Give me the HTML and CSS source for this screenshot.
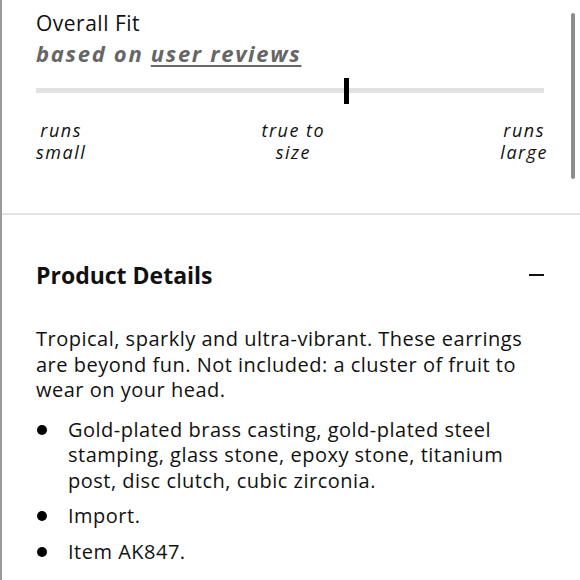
FILE: index.html
```html
<!DOCTYPE html>
<html>
<head>
<meta charset="utf-8">
<link rel="stylesheet" href="styles.css">
</head>
<body>
<div class="page">
  <div class="scrollbar"></div>
  <section class="fit">
    <div class="fit-title">Overall Fit</div>
    <div class="fit-sub">based on <span class="link">user reviews</span></div>
    <div class="track"><div class="marker"></div></div>
    <div class="labels">
      <div class="lbl">runs<br>small</div>
      <div class="lbl">true to<br>size</div>
      <div class="lbl">runs<br>large</div>
    </div>
  </section>
  <section class="details">
    <div class="details-head">
      <h2>Product Details</h2>
      <div class="minus"></div>
    </div>
    <p class="desc">Tropical, sparkly and ultra-vibrant. These earrings are beyond fun. Not included: a cluster of fruit to wear on your head.</p>
    <ul class="bullets">
      <li>Gold-plated brass casting, gold-plated steel stamping, glass stone, epoxy stone, titanium post, disc clutch, cubic zirconia.</li>
      <li>Import.</li>
      <li>Item AK847.</li>
    </ul>
  </section>
</div>
</body>
</html>
```
FILE: styles.css
```css
html, body {
  margin: 0;
  padding: 0;
  background: #fff;
}
.page {
  position: relative;
  height: 580px;
  overflow: hidden;
  border-left: 2px solid #9a9a9a;
  font-family: "Open Sans", "Noto Sans", sans-serif;
  color: #111;
}
.scrollbar {
  position: absolute;
  left: 569px;
  top: 13px;
  width: 4px;
  height: 166px;
  border-radius: 2px;
  background: #8c8c8c;
}
.fit {
  padding: 9px 34px 0 34px;
  height: 204px;
  border-bottom: 2px solid #e4e4e4;
}
.fit-title {
  font-size: 21px;
  line-height: 29px;
  letter-spacing: 0.5px;
}
.fit-sub {
  font-size: 22px;
  line-height: 30px;
  font-weight: 700;
  font-style: italic;
  letter-spacing: 1.7px;
  color: #666;
}
.fit-sub .link {
  text-decoration: underline;
  text-decoration-thickness: 2px;
  text-underline-offset: 3px;
}
.track {
  position: relative;
  margin-top: 20px;
  width: 508px;
  height: 5px;
  background: #e2e2e2;
}
.marker {
  position: absolute;
  left: 308px;
  top: -10px;
  width: 5px;
  height: 26px;
  background: #000;
}
.labels {
  display: flex;
  justify-content: space-between;
  margin-top: 26px;
  width: 512px;
}
.lbl {
  font-size: 18px;
  line-height: 22px;
  font-style: italic;
  letter-spacing: 1.5px;
  text-align: center;
}
.details {
  padding: 0 34px;
}
.details-head {
  display: flex;
  justify-content: space-between;
  align-items: center;
  margin-top: 45px;
  padding-right: 2px;
}
.details-head h2 {
  margin: 0;
  font-size: 23px;
  line-height: 30px;
  font-weight: 700;
}
.minus {
  width: 15px;
  height: 2.5px;
  background: #111;
}
.desc {
  margin: 36px 0 0 0;
  font-size: 20px;
  line-height: 25.5px;
  letter-spacing: 0.5px;
}
.bullets {
  margin: 14px 0 0 0;
  padding: 0;
  list-style: none;
}
.bullets li {
  position: relative;
  padding-left: 32px;
  font-size: 20px;
  line-height: 25.5px;
  letter-spacing: 0.5px;
  margin-bottom: 10px;
}
.bullets li::before {
  content: "";
  position: absolute;
  left: 1px;
  top: 8px;
  width: 10px;
  height: 10px;
  border-radius: 50%;
  background: #000;
}
```
